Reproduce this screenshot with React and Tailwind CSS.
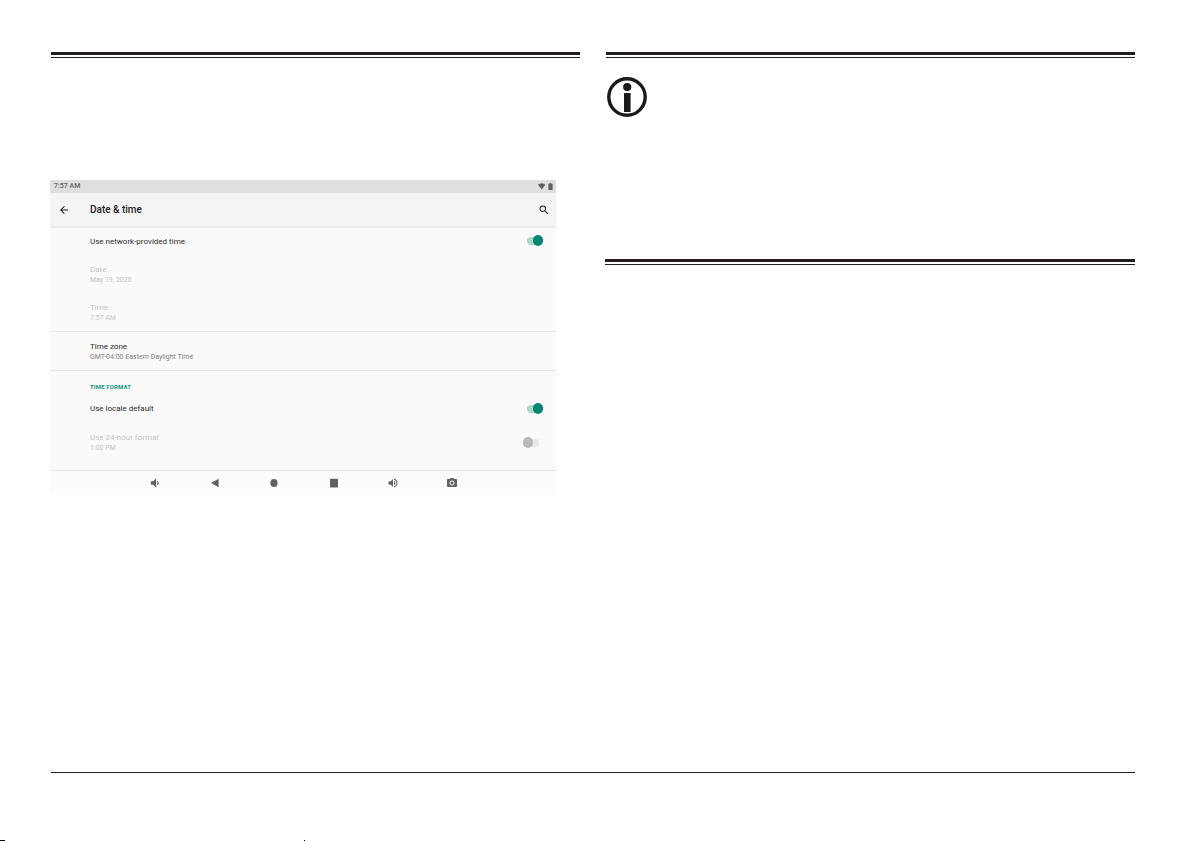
import clsx from 'clsx'
import { MdArrowBack, MdCameraAlt, MdSearch, MdVolumeDown, MdVolumeUp } from 'react-icons/md'

function DoubleRule({ className }) {
  return <div className={clsx('h-1.5 border-t-3 border-b border-[#231f20]', className)} />
}

function Switch({ id, ...props }) {
  return (
    <input
      id={id}
      type="checkbox"
      role="switch"
      className="relative mr-[17px] h-2 w-3 shrink-0 appearance-none rounded-full bg-[#e8e8e8] before:absolute before:-top-0.5 before:-left-1 before:h-[11px] before:w-2.5 before:rounded-full before:bg-[#b9b9b9] checked:bg-[#b0d8d3] checked:before:left-1.5 checked:before:bg-[#058675]"
      {...props}
    />
  )
}

function Setting({ title, summary, disabled, htmlFor, className, children }) {
  const Title = htmlFor ? 'label' : 'div'

  return (
    <div className={clsx('flex items-center justify-between pl-10', className)}>
      <div>
        <Title
          htmlFor={htmlFor}
          className={clsx(
            'block text-[8px] leading-[11px]',
            disabled ? 'text-[#c4c4c4]' : 'text-[#2b2b2b]'
          )}
        >
          {title}
        </Title>
        {summary && (
          <div
            className={clsx(
              'text-[7px] leading-[11px]',
              disabled ? 'text-[#c4c4c4]' : 'text-[#808080]'
            )}
          >
            {summary}
          </div>
        )}
      </div>
      {children}
    </div>
  )
}

const navItems = [
  { label: 'Volume down', icon: <MdVolumeDown className="size-3.5" /> },
  {
    label: 'Back',
    icon: (
      <svg viewBox="0 0 12 12" className="size-3" fill="currentColor">
        <path d="M9.6 1.8v8.4L2 6z" />
      </svg>
    ),
  },
  {
    label: 'Home',
    icon: (
      <svg viewBox="0 0 12 12" className="size-3" fill="currentColor">
        <ellipse cx="6" cy="6" rx="3.6" ry="4" />
      </svg>
    ),
  },
  {
    label: 'Recent apps',
    icon: (
      <svg viewBox="0 0 12 12" className="size-3" fill="currentColor">
        <rect x="2" y="1.8" width="8" height="8.6" rx="0.4" />
      </svg>
    ),
  },
  { label: 'Volume up', icon: <MdVolumeUp className="size-3" /> },
  { label: 'Screenshot', icon: <MdCameraAlt className="size-3" /> },
]

function DateTimeScreen() {
  return (
    <section className="mt-[122px] mr-6 -ml-px bg-[#fafafa] font-[Roboto,sans-serif]">
      {/* Status bar */}
      <div className="flex h-[13px] items-center justify-between bg-[#dfdfdf] pr-[3px] pl-1 text-[#616161]">
        <span className="text-[7px] leading-[11px] font-medium">7:57 AM</span>
        <svg viewBox="0 0 15 7" className="h-[7px] w-[15px]" fill="currentColor">
          <path d="M0 1.8Q3.7-1.2 7.4 1.8L3.7 6.6z" />
          <path d="M10.4.8h1.2V0h1.8v.8h1.2V7h-4.2z" />
        </svg>
      </div>

      {/* Toolbar */}
      <header className="flex h-[34px] items-center border-b border-[#ebebeb] bg-[#f4f4f4] pr-1.5 pl-2 text-[#212121] shadow-[0_1px_1px_#ececec]">
        <button aria-label="Back" className="w-8">
          <MdArrowBack className="size-3" />
        </button>
        <h1 className="text-[10px] leading-4 font-medium">Date &amp; time</h1>
        <button aria-label="Search" className="ml-auto">
          <MdSearch className="size-3" />
        </button>
      </header>

      <Setting title="Use network-provided time" htmlFor="network-time" className="h-7">
        <Switch id="network-time" defaultChecked />
      </Setting>
      <Setting title="Date" summary="May 19, 2020" disabled className="h-10" />
      <Setting title="Time" summary="7:57 AM" disabled className="h-9" />
      <Setting
        title="Time zone"
        summary="GMT-04:00 Eastern Daylight Time"
        className="h-10 border-y border-[#e6e6e6] pt-0.5"
      />
      <h2 className="pt-2.5 pl-10 text-[6px] leading-[11px] font-bold tracking-wide text-[#1a9384]">
        TIME FORMAT
      </h2>
      <Setting title="Use locale default" htmlFor="locale-default" className="h-[33px]">
        <Switch id="locale-default" defaultChecked />
      </Setting>
      <Setting
        title="Use 24-hour format"
        summary="1:00 PM"
        disabled
        htmlFor="hour-format"
        className="h-9"
      >
        <Switch id="hour-format" disabled />
      </Setting>

      {/* Navigation bar */}
      <nav className="mt-[9px] flex h-[25px] items-center justify-between border-t border-[#e6e6e6] bg-[#fcfcfc] px-[98px] text-[#616161]">
        {navItems.map((item) => (
          <button key={item.label} aria-label={item.label}>
            {item.icon}
          </button>
        ))}
      </nav>
    </section>
  )
}

function InfoIcon() {
  return (
    <svg viewBox="0 0 40 40" className="mt-[19px] ml-px size-10" role="img" aria-label="Information">
      <circle cx="20" cy="20" r="18.2" fill="none" stroke="#1a1a1a" strokeWidth="3.4" />
      <circle cx="20.2" cy="10" r="4.1" fill="#1a1a1a" />
      <path d="M17 16h6.6v19H17z" fill="#1a1a1a" />
    </svg>
  )
}

export default function App() {
  return (
    <div className="flex min-h-screen flex-col bg-white">
      <main className="grid grow grid-cols-2 gap-[26px] pt-[52px] pr-[57px] pl-[51px]">
        <div>
          <DoubleRule />
          <DateTimeScreen />
        </div>
        <div>
          <DoubleRule />
          <InfoIcon />
          <DoubleRule className="mt-[142px] -ml-px" />
        </div>
      </main>

      <footer>
        <div className="mr-[57px] ml-[51px] border-t border-[#231f20]" />
        {/* Trim marks */}
        <div className="flex gap-[299px] pt-[67px]">
          <div className="h-px w-[5px] bg-black" />
          <div className="h-px w-px bg-black" />
        </div>
      </footer>
    </div>
  )
}
